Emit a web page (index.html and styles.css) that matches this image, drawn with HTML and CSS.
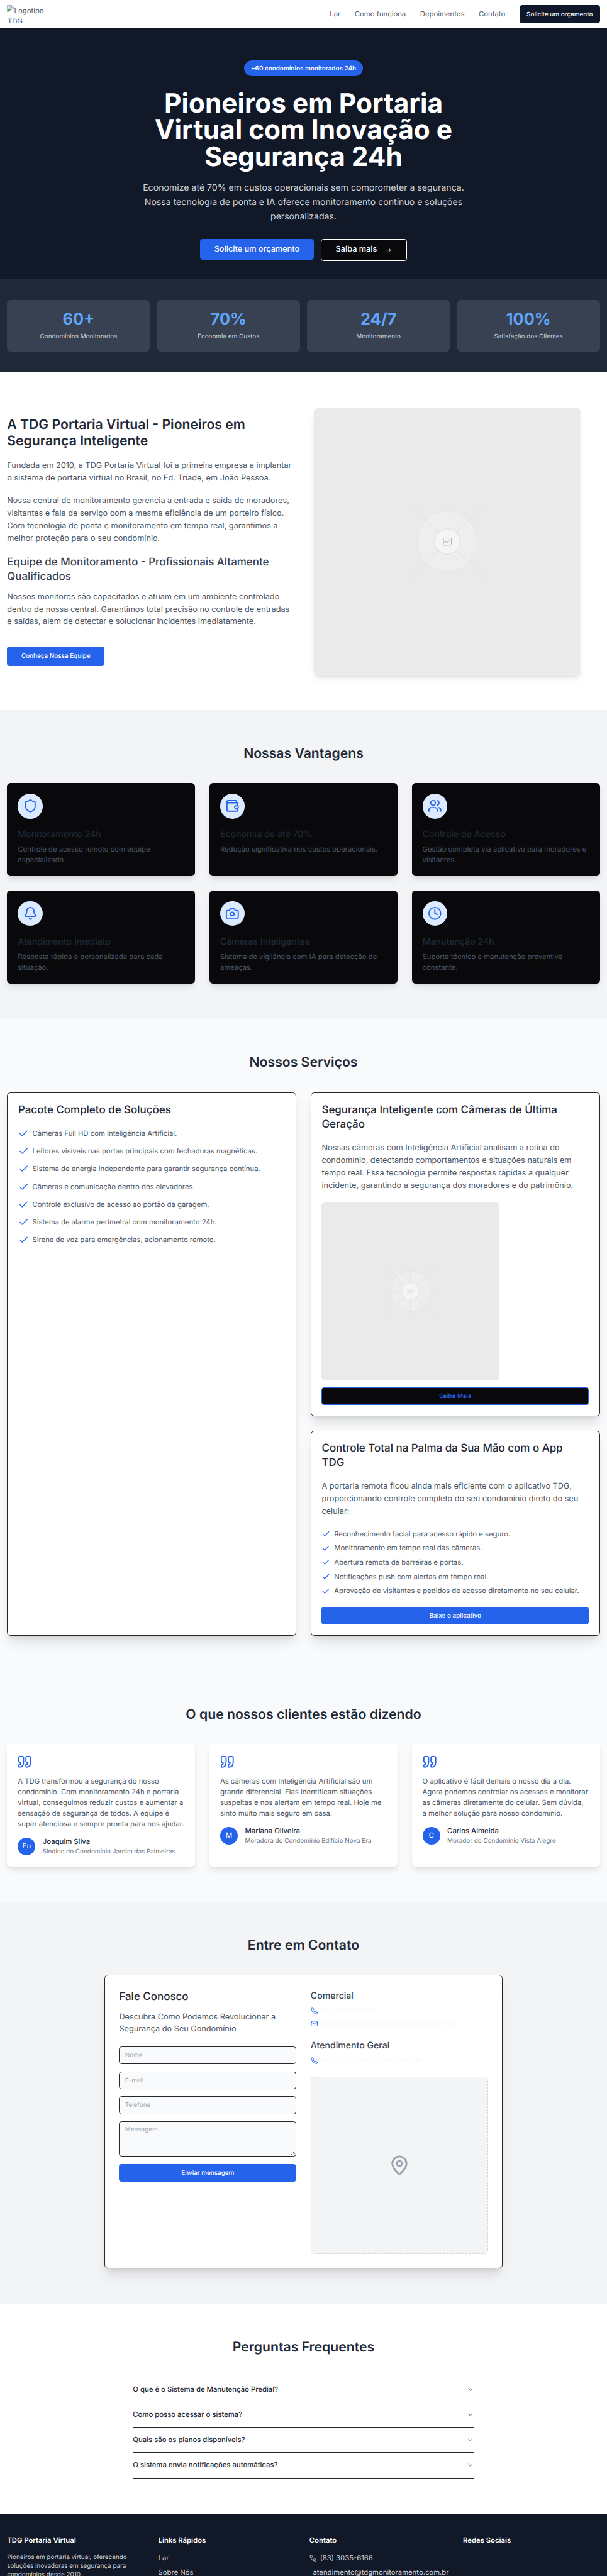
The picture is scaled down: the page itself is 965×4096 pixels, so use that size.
FILE: index.html
```
<!DOCTYPE html>
<html lang="pt-BR">
<head>
<meta charset="utf-8">
<title>TDG Portaria Virtual</title>
<link rel="stylesheet" href="styles.css">
</head>
<body>
<svg class="defs" aria-hidden="true">
  <defs>
    <radialGradient id="ray" gradientUnits="userSpaceOnUse" cx="300" cy="300" r="132">
      <stop offset="0" stop-color="#c9c9c9"/>
      <stop offset="0.25" stop-color="#d6d6d6"/>
      <stop offset="0.72" stop-color="#dedede" stop-opacity="0.6"/>
      <stop offset="1" stop-color="#e2e2e2" stop-opacity="0"/>
    </radialGradient>
    <radialGradient id="ray-short" gradientUnits="userSpaceOnUse" cx="300" cy="300" r="95">
      <stop offset="0" stop-color="#c9c9c9"/>
      <stop offset="0.35" stop-color="#d6d6d6"/>
      <stop offset="0.72" stop-color="#dedede" stop-opacity="0.7"/>
      <stop offset="1" stop-color="#e2e2e2" stop-opacity="0"/>
    </radialGradient>
  </defs>
  <symbol id="i-check" viewBox="0 0 24 24"><path d="M20 6 9 17l-5-5"/></symbol>
  <symbol id="i-chevron" viewBox="0 0 24 24"><path d="m6 9 6 6 6-6"/></symbol>
  <symbol id="i-phone" viewBox="0 0 24 24"><path d="M22 16.92v3a2 2 0 0 1-2.18 2 19.79 19.79 0 0 1-8.63-3.07 19.5 19.5 0 0 1-6-6 19.79 19.79 0 0 1-3.07-8.67A2 2 0 0 1 4.11 2h3a2 2 0 0 1 2 1.72 12.84 12.84 0 0 0 .7 2.81 2 2 0 0 1-.45 2.11L8.09 9.91a16 16 0 0 0 6 6l1.27-1.27a2 2 0 0 1 2.11-.45 12.84 12.84 0 0 0 2.81.7A2 2 0 0 1 22 16.92z"/></symbol>
  <symbol id="i-quote" viewBox="0 0 24 24"><path d="M3 21c3 0 7-1 7-8V5c0-1.25-.756-2.017-2-2H4c-1.25 0-2 .75-2 1.972V11c0 1.25.75 2 2 2 1 0 1 0 1 1v1c0 1-1 2-2 2s-1 .008-1 1.031V20c0 1 0 1 1 1z"/><path d="M15 21c3 0 7-1 7-8V5c0-1.25-.757-2.017-2-2h-4c-1.25 0-2 .75-2 1.972V11c0 1.25.75 2 2 2h.75c0 2.25.25 4-2.75 4v3c0 1 0 1 1 1z"/></symbol>
  <symbol id="placeholder" viewBox="0 0 600 600">
    <rect width="600" height="600" fill="#eaeaea"/>
    <circle cx="300" cy="300" r="68" fill="#eeeeee" stroke="#e1e1e1" stroke-width="1.2"/>
    <path stroke="url(#ray)" stroke-width="1.2" fill="none" d="M206 206 394 394M394 206 206 394"/>
    <path stroke="url(#ray-short)" stroke-width="1.2" fill="none" d="M205 299.5 395 299.6M299.6 205 299.5 395"/>
    <circle cx="300.3" cy="300" r="28.4" fill="#f5f5f5" stroke="#dadada" stroke-width="1.2"/>
    <path fill="none" stroke="#a8a8a8" stroke-width="1.3" stroke-linejoin="round" d="M291.7 292.5h17.8v14a2 2 0 0 1-2 2h-13.8a2 2 0 0 1-2-2zM292 303.500l2.500-2a5 5 0 0 1 5.500.4l2.500 2.300M299.500 301.500l4.200-4.300a1 1 0 0 1 1.600 0l4 3.800"/>
  </symbol>
</svg>
<div class="page">
  <header class="topbar">
    <div class="logo">
      <svg class="broken" viewBox="0 0 16 16"><path d="M.5.5h10l5 5v3l-4 3-3.500-1.500L.5 15.500z" fill="#c3d8f8"/><path d="M2 5.500c1-1.600 3-1.600 4 0 1 0 1.500 1 1.500 1.500H1.500c0-.6 0-1.300.5-1.500z" fill="#fff"/><path d="M1 15v-2.500l4-4 4 2L4.500 15z" fill="#4aa33c"/><path d="M.5 15.500V.5h10l5 5v3M10.500.5v5h5" fill="none" stroke="#9a9a9a"/></svg><span>Logotipo TDG</span>
    </div>
    <nav class="nav">
      <a>Lar</a><a>Como funciona</a><a>Depoimentos</a><a>Contato</a>
      <a class="btn btn-dark">Solicite um orçamento</a>
    </nav>
  </header>

  <section class="hero">
    <span class="badge">+60 condomínios monitorados 24h</span>
    <h1>Pioneiros em Portaria<br>Virtual com Inovação e<br>Segurança 24h</h1>
    <p>Economize até 70% em custos operacionais sem comprometer a segurança.<br>Nossa tecnologia de ponta e IA oferece monitoramento contínuo e soluções<br>personalizadas.</p>
    <div class="hero-actions">
      <a class="btn btn-lg btn-blue">Solicite um orçamento</a>
      <a class="btn btn-lg btn-outline">Saiba mais
        <svg class="icon arrow" viewBox="0 0 24 24"><path d="M5 12h14M12 5l7 7-7 7"/></svg></a>
    </div>
  </section>

  <section class="stats">
    <div class="stat"><strong>60+</strong><span>Condomínios Monitorados</span></div>
    <div class="stat"><strong>70%</strong><span>Economia em Custos</span></div>
    <div class="stat"><strong>24/7</strong><span>Monitoramento</span></div>
    <div class="stat"><strong>100%</strong><span>Satisfação dos Clientes</span></div>
  </section>

  <section class="about">
    <div class="about-text">
      <h2>A TDG Portaria Virtual - Pioneiros em<br>Segurança Inteligente</h2>
      <p>Fundada em 2010, a TDG Portaria Virtual foi a primeira empresa a implantar<br>o sistema de portaria virtual no Brasil, no Ed. Tríade, em João Pessoa.</p>
      <p>Nossa central de monitoramento gerencia a entrada e saída de moradores,<br>visitantes e fala de serviço com a mesma eficiência de um porteiro físico.<br>Com tecnologia de ponta e monitoramento em tempo real, garantimos a<br>melhor proteção para o seu condomínio.</p>
      <h3>Equipe de Monitoramento - Profissionais Altamente<br>Qualificados</h3>
      <p class="tight">Nossos monitores são capacitados e atuam em um ambiente controlado<br>dentro de nossa central. Garantimos total precisão no controle de entradas<br>e saídas, além de detectar e solucionar incidentes imediatamente.</p>
      <a class="btn btn-blue btn-team">Conheça Nossa Equipe</a>
    </div>
    <svg class="about-image"><use href="#placeholder"/></svg>
  </section>

  <section class="section gray">
    <h2 class="heading">Nossas Vantagens</h2>
    <div class="grid3">
      <article class="feature">
        <span class="bubble"><svg class="icon" viewBox="0 0 24 24"><path d="M20 13c0 5-3.500 7.500-7.660 8.950a1 1 0 0 1-.67-.01C7.500 20.500 4 18 4 13V6a1 1 0 0 1 1-1c2 0 4.500-1.200 6.240-2.720a1.170 1.170 0 0 1 1.520 0C14.510 3.810 17 5 19 5a1 1 0 0 1 1 1z"/></svg></span>
        <h3>Monitoramento 24h</h3><p>Controle de acesso remoto com equipe<br>especializada.</p>
      </article>
      <article class="feature">
        <span class="bubble"><svg class="icon" viewBox="0 0 24 24"><path d="M19 7V4a1 1 0 0 0-1-1H5a2 2 0 0 0 0 4h15a1 1 0 0 1 1 1v4h-3a2 2 0 0 0 0 4h3a1 1 0 0 0 1-1v-2a1 1 0 0 0-1-1"/><path d="M3 5v14a2 2 0 0 0 2 2h15a1 1 0 0 0 1-1v-4"/></svg></span>
        <h3>Economia de até 70%</h3><p>Redução significativa nos custos operacionais.</p>
      </article>
      <article class="feature">
        <span class="bubble"><svg class="icon" viewBox="0 0 24 24"><path d="M16 21v-2a4 4 0 0 0-4-4H6a4 4 0 0 0-4 4v2"/><circle cx="9" cy="7" r="4"/><path d="M22 21v-2a4 4 0 0 0-3-3.870M16 3.130a4 4 0 0 1 0 7.750"/></svg></span>
        <h3>Controle de Acesso</h3><p>Gestão completa via aplicativo para moradores e<br>visitantes.</p>
      </article>
      <article class="feature">
        <span class="bubble"><svg class="icon" viewBox="0 0 24 24"><path d="M10.268 21a2 2 0 0 0 3.464 0"/><path d="M3.262 15.326A1 1 0 0 0 4 17h16a1 1 0 0 0 .740-1.673C19.410 13.956 18 12.499 18 8A6 6 0 0 0 6 8c0 4.499-1.411 5.956-2.738 7.326"/></svg></span>
        <h3>Atendimento Imediato</h3><p>Resposta rápida e personalizada para cada<br>situação.</p>
      </article>
      <article class="feature">
        <span class="bubble"><svg class="icon" viewBox="0 0 24 24"><path d="M14.500 4h-5L7 7H4a2 2 0 0 0-2 2v9a2 2 0 0 0 2 2h16a2 2 0 0 0 2-2V9a2 2 0 0 0-2-2h-3z"/><circle cx="12" cy="13" r="3"/></svg></span>
        <h3>Câmeras Inteligentes</h3><p>Sistema de vigilância com IA para detecção de<br>ameaças.</p>
      </article>
      <article class="feature">
        <span class="bubble"><svg class="icon" viewBox="0 0 24 24"><circle cx="12" cy="12" r="10"/><path d="M12 6v6l4 2"/></svg></span>
        <h3>Manutenção 24h</h3><p>Suporte técnico e manutenção preventiva<br>constante.</p>
      </article>
    </div>
  </section>

  <section class="section light">
    <h2 class="heading">Nossos Serviços</h2>
    <div class="services">
      <article class="card">
        <h3>Pacote Completo de Soluções</h3>
        <ul class="checks">
          <li><svg class="icon"><use href="#i-check"/></svg>Câmeras Full HD com Inteligência Artificial.</li>
          <li><svg class="icon"><use href="#i-check"/></svg>Leitores visíveis nas portas principais com fechaduras magnéticas.</li>
          <li><svg class="icon"><use href="#i-check"/></svg>Sistema de energia independente para garantir segurança contínua.</li>
          <li><svg class="icon"><use href="#i-check"/></svg>Câmeras e comunicação dentro dos elevadores.</li>
          <li><svg class="icon"><use href="#i-check"/></svg>Controle exclusivo de acesso ao portão da garagem.</li>
          <li><svg class="icon"><use href="#i-check"/></svg>Sistema de alarme perimetral com monitoramento 24h.</li>
          <li><svg class="icon"><use href="#i-check"/></svg>Sirene de voz para emergências, acionamento remoto.</li>
        </ul>
      </article>
      <div class="stack">
        <article class="card">
          <h3>Segurança Inteligente com Câmeras de Última<br>Geração</h3>
          <p>Nossas câmeras com Inteligência Artificial analisam a rotina do<br>condomínio, detectando comportamentos e situações naturais em<br>tempo real. Essa tecnologia permite respostas rápidas a qualquer<br>incidente, garantindo a segurança dos moradores e do patrimônio.</p>
          <svg class="card-image"><use href="#placeholder"/></svg>
          <a class="btn btn-block btn-more">Saiba Mais</a>
        </article>
        <article class="card">
          <h3>Controle Total na Palma da Sua Mão com o App<br>TDG</h3>
          <p>A portaria remota ficou ainda mais eficiente com o aplicativo TDG,<br>proporcionando controle completo do seu condomínio direto do seu<br>celular:</p>
          <ul class="checks small">
            <li><svg class="icon"><use href="#i-check"/></svg>Reconhecimento facial para acesso rápido e seguro.</li>
            <li><svg class="icon"><use href="#i-check"/></svg>Monitoramento em tempo real das câmeras.</li>
            <li><svg class="icon"><use href="#i-check"/></svg>Abertura remota de barreiras e portas.</li>
            <li><svg class="icon"><use href="#i-check"/></svg>Notificações push com alertas em tempo real.</li>
            <li><svg class="icon"><use href="#i-check"/></svg>Aprovação de visitantes e pedidos de acesso diretamente no seu celular.</li>
          </ul>
          <a class="btn btn-block btn-blue btn-app">Baixe o aplicativo</a>
        </article>
      </div>
    </div>
  </section>

  <section class="section light">
    <h2 class="heading">O que nossos clientes estão dizendo</h2>
    <div class="grid3">
      <article class="quote">
        <svg class="icon"><use href="#i-quote"/></svg>
        <p>A TDG transformou a segurança do nosso<br>condomínio. Com monitoramento 24h e portaria<br>virtual, conseguimos reduzir custos e aumentar a<br>sensação de segurança de todos. A equipe é<br>super atenciosa e sempre pronta para nos ajudar.</p>
        <div class="author"><span class="avatar">Eu</span><div><b>Joaquim Silva</b><small>Síndico do Condomínio Jardim das Palmeiras</small></div></div>
      </article>
      <article class="quote">
        <svg class="icon"><use href="#i-quote"/></svg>
        <p>As câmeras com Inteligência Artificial são um<br>grande diferencial. Elas identificam situações<br>suspeitas e nos alertam em tempo real. Hoje me<br>sinto muito mais seguro em casa.</p>
        <div class="author"><span class="avatar">M</span><div><b>Mariana Oliveira</b><small>Moradora do Condomínio Edifício Nova Era</small></div></div>
      </article>
      <article class="quote">
        <svg class="icon"><use href="#i-quote"/></svg>
        <p>O aplicativo é fácil demais o nosso dia a dia.<br>Agora podemos controlar os acessos e monitorar<br>as câmeras diretamente do celular. Sem dúvida,<br>a melhor solução para nosso condomínio.</p>
        <div class="author"><span class="avatar">C</span><div><b>Carlos Almeida</b><small>Morador do Condomínio Vista Alegre</small></div></div>
      </article>
    </div>
  </section>

  <section class="section gray">
    <h2 class="heading">Entre em Contato</h2>
    <div class="contact">
      <form class="form">
        <h3>Fale Conosco</h3>
        <p>Descubra Como Podemos Revolucionar a<br>Segurança do Seu Condomínio</p>
        <input class="field" placeholder="Nome">
        <input class="field" placeholder="E-mail">
        <input class="field" placeholder="Telefone">
        <textarea class="field area" placeholder="Mensagem"></textarea>
        <a class="btn btn-block btn-blue">Enviar mensagem</a>
      </form>
      <div class="channels">
        <h4>Comercial</h4>
        <div class="line"><svg class="icon"><use href="#i-phone"/></svg><span>(83) 99334-7113</span></div>
        <div class="line"><svg class="icon" viewBox="0 0 24 24"><rect x="2" y="4" width="20" height="16" rx="2"/><path d="m22 7-8.970 5.700a1.940 1.940 0 0 1-2.060 0L2 7"/></svg><span>atendimento@tdgmonitoramento.com.br</span></div>
        <h4 class="second">Atendimento Geral</h4>
        <div class="line"><svg class="icon"><use href="#i-phone"/></svg><span>(83) 3035-6166 / 99129-8598</span></div>
        <div class="map"><svg class="icon" viewBox="0 0 24 24"><path d="M20 10c0 4.993-5.539 10.193-7.399 11.799a1 1 0 0 1-1.202 0C9.539 20.193 4 14.993 4 10a8 8 0 0 1 16 0"/><circle cx="12" cy="10" r="3"/></svg></div>
      </div>
    </div>
  </section>

  <section class="section white">
    <h2 class="heading">Perguntas Frequentes</h2>
    <div class="faq">
      <div class="faq-item">O que é o Sistema de Manutenção Predial?<svg class="icon"><use href="#i-chevron"/></svg></div>
      <div class="faq-item">Como posso acessar o sistema?<svg class="icon"><use href="#i-chevron"/></svg></div>
      <div class="faq-item">Quais são os planos disponíveis?<svg class="icon"><use href="#i-chevron"/></svg></div>
      <div class="faq-item">O sistema envia notificações automáticas?<svg class="icon"><use href="#i-chevron"/></svg></div>
    </div>
  </section>

  <footer class="footer">
    <div><h5>TDG Portaria Virtual</h5><p>Pioneiros em portaria virtual, oferecendo<br>soluções inovadoras em segurança para<br>condomínios desde 2010.</p></div>
    <div><h5>Links Rápidos</h5><a>Lar</a><a>Sobre Nós</a></div>
    <div><h5>Contato</h5><a class="tel"><svg class="icon"><use href="#i-phone"/></svg>(83) 3035-6166</a><a class="mail">atendimento@tdgmonitoramento.com.br</a></div>
    <div><h5>Redes Sociais</h5></div>
  </footer>
</div>
</body>
</html>
```
FILE: styles.css
```
/* 1rem = ten design pixels */
html { font-size: 7.0625px; }
*, *::before, *::after { box-sizing: border-box; margin: 0; padding: 0; }
body { font-family: Inter, "Liberation Sans", sans-serif; font-size: 1.6rem; line-height: 2.4rem; color: #09090b; background: #fff; text-rendering: geometricPrecision; }
.defs { position: absolute; width: 0; height: 0; }
.page { height: 4096px; overflow: hidden; display: flex; flex-direction: column; }
.page > * { flex-shrink: 0; }
h1, h2, h3, h4, h5, b { font-weight: 600; }
ul { list-style: none; }
.icon { width: 2.4rem; height: 2.4rem; flex-shrink: 0; fill: none; stroke: currentColor; stroke-width: 2; stroke-linecap: round; stroke-linejoin: round; }

.btn { display: flex; align-items: center; justify-content: center; height: 4rem; padding: 0 1.6rem; border-radius: .6rem; font-size: 1.4rem; line-height: 2rem; font-weight: 500; white-space: nowrap; }
.btn-dark { background: #0f172a; color: #f8fafc; }
.btn-blue { background: #2563eb; color: #fff; }
.btn-block { width: 100%; }
.btn-more { margin-top: 1.6rem; background: #09090b; border: 1px solid #2563eb; color: #2563eb; }
.btn-app { margin-top: 2.4rem; }
.btn-lg { height: 4.8rem; padding: 0 3.2rem; font-size: 1.8rem; line-height: 2.8rem; }
.btn-outline { height: 5rem; background: #09090b; border: 1px solid #fff; color: #fff; }
.btn-team { display: inline-flex; height: 4.4rem; padding: 0 3.2rem; margin-top: 4rem; }

.topbar { display: flex; justify-content: space-between; height: 6.4rem; padding: 1.2rem 1.6rem; background: #fff; }
.logo { display: flex; align-items: flex-start; width: 8.4rem; height: 4rem; overflow: hidden; color: #4b5563; }
.logo span { padding-top: .1rem; margin-left: -1.5rem; text-indent: 1.5rem; }
.broken { width: 1.6rem; height: 1.6rem; flex-shrink: 0; }
.nav { display: flex; align-items: center; gap: 3.2rem; color: #4b5563; }

.hero { height: 56.3rem; padding-top: 7.2rem; background: #111827; color: #fff; display: flex; flex-direction: column; align-items: center; text-align: center; }
.badge { padding: .8rem 1.6rem; border-radius: 5rem; background: #2563eb; font-size: 1.4rem; line-height: 2rem; font-weight: 600; }
.hero h1 { margin-top: 3.2rem; font-size: 6rem; line-height: 6rem; font-weight: 700; }
.hero p { margin-top: 2.4rem; font-size: 2rem; line-height: 3.25rem; color: #d1d5db; }
.hero-actions { display: flex; align-items: flex-start; gap: 1.6rem; margin-top: 3.2rem; }
.arrow { width: 1.6rem; height: 1.6rem; margin-left: 1.8rem; }

.stats { display: grid; grid-template-columns: repeat(4, 1fr); gap: 1.6rem; padding: 4.8rem 1.6rem; background: #1f2937; }
.stat { display: flex; flex-direction: column; align-items: center; gap: .8rem; padding: 2.4rem; border-radius: .8rem; background: #374151; }
.stat strong { font-size: 3.6rem; line-height: 4rem; font-weight: 700; color: #60a5fa; }
.stat span { font-size: 1.4rem; line-height: 2rem; color: #d1d5db; }

.about { display: grid; grid-template-columns: 1fr 1fr; gap: 4.8rem; align-items: center; padding: 8rem 1.6rem; background: #fff; }
.about-text { white-space: nowrap; }
.about-text h2 { font-size: 3rem; line-height: 3.6rem; color: #1f2937; }
.about-text h3 { margin-top: 2.4rem; font-size: 2.4rem; line-height: 3.2rem; font-weight: 500; color: #374151; }
.about-text p { margin-top: 2.4rem; font-size: 1.8rem; line-height: 2.8rem; color: #4b5563; }
.about-text p.tight { margin-top: 1.6rem; }
.about-image { width: 60rem; height: 60rem; border-radius: .8rem; box-shadow: 0 1rem 1.5rem -.3rem rgba(0,0,0,.1), 0 .4rem .6rem -.4rem rgba(0,0,0,.1); }

.section { padding: 8rem 1.6rem; }
.gray { background: #f3f4f6; }
.light { background: #f9fafb; }
.white { background: #fff; }
.heading { margin-bottom: 4.8rem; font-size: 3rem; line-height: 3.6rem; text-align: center; color: #1f2937; }
.grid3 { display: grid; grid-template-columns: repeat(3, 1fr); gap: 3.2rem; }

.feature { height: 21rem; padding: 2.4rem; border-radius: .8rem; background: #09090b; color: #4b5563; white-space: nowrap; box-shadow: 0 1rem 1.5rem -.3rem rgba(0,0,0,.1), 0 .4rem .6rem -.4rem rgba(0,0,0,.1); }
.bubble { display: flex; width: 5.6rem; height: 5.6rem; padding: 1.2rem; border-radius: 50%; background: #dbeafe; color: #2563eb; }
.bubble .icon { width: 3.2rem; height: 3.2rem; }
.feature h3 { margin-top: 2.2rem; margin-bottom: .8rem; font-size: 2rem; line-height: 2.8rem; font-weight: 500; color: #1f2937; }

.services { display: grid; grid-template-columns: 1fr 1fr; gap: 3.2rem; }
.stack { display: flex; flex-direction: column; gap: 3.2rem; }
.card { padding: calc(2.5rem - 1px); border: 1px solid #27272a; border-radius: .8rem; background: #fff; color: #4b5563; white-space: nowrap; box-shadow: 0 2rem 2.5rem -.5rem rgba(0,0,0,.1), 0 .8rem 1rem -.6rem rgba(0,0,0,.1); }
.card h3 { font-size: 2.4rem; line-height: 3.2rem; font-weight: 500; color: #1f2937; }
.card p { margin-top: 2.4rem; font-size: 1.8rem; line-height: 2.8rem; }
.card-image { display: block; width: 40rem; height: 40rem; margin-top: 2.4rem; border-radius: .8rem; }
.checks { display: flex; flex-direction: column; gap: 1.6rem; margin-top: 2.4rem; }
.checks li { display: flex; align-items: center; gap: .8rem; }
.checks .icon { color: #2563eb; }
.checks.small { gap: .8rem; }
.checks.small .icon { width: 2rem; height: 2rem; }

.quote { padding: 2.4rem; border-radius: .8rem; background: #fff; color: #4b5563; white-space: nowrap; box-shadow: 0 1rem 1.5rem -.3rem rgba(0,0,0,.1), 0 .4rem .6rem -.4rem rgba(0,0,0,.1); }
.quote > .icon { display: block; width: 3.2rem; height: 3.2rem; color: #2563eb; }
.quote p { margin: 1.6rem 0; }
.author { display: flex; align-items: center; gap: 1.6rem; }
.author b { display: block; font-weight: 500; color: #1f2937; }
.author small { display: block; font-size: 1.4rem; line-height: 2rem; color: #6b7280; }
.avatar { display: flex; align-items: center; justify-content: center; width: 4rem; height: 4rem; border-radius: 50%; background: #2563eb; color: #fff; }

.contact { display: grid; grid-template-columns: 1fr 1fr; gap: 3.2rem; width: 89.6rem; margin: 0 auto; padding: calc(3.3rem - 1px); border: 1px solid #27272a; border-radius: .8rem; background: #fff; box-shadow: 0 2rem 2.5rem -.5rem rgba(0,0,0,.1), 0 .8rem 1rem -.6rem rgba(0,0,0,.1); }
.form { display: flex; flex-direction: column; gap: 1.6rem; }
.form h3 { font-size: 2.4rem; line-height: 3.2rem; font-weight: 500; color: #1f2937; }
.form p { margin-bottom: .8rem; font-size: 1.8rem; line-height: 2.8rem; color: #4b5563; }
.field { display: block; width: 100%; height: 4rem; padding: .8rem 1.2rem; border: 1px solid #27272a; border-radius: .6rem; background: #f9fafb; font: inherit; font-size: 1.4rem; line-height: 2rem; outline: none; text-rendering: inherit; }
.area { height: 8rem; }
.field::placeholder { color: #9ca3af; opacity: 1; }
.channels h4 { margin-bottom: .8rem; font-size: 2rem; line-height: 2.8rem; font-weight: 500; color: #374151; }
.channels h4.second { margin-top: 2.4rem; }
.line { display: flex; align-items: center; gap: .8rem; color: #fafafa; }
.line + .line { margin-top: .4rem; }
.line .icon { width: 1.6rem; height: 1.6rem; color: #2563eb; }
.map { display: flex; align-items: center; justify-content: center; aspect-ratio: 1; margin-top: 2.4rem; border: 1.4px dashed #d1d5db; border-radius: .8rem; background: #f3f4f6; color: #9ca3af; }
.map .icon { width: 4.8rem; height: 4.8rem; }

.faq { width: 76.8rem; margin: 0 auto; }
.faq-item { display: flex; align-items: center; justify-content: space-between; height: 5.7rem; border-bottom: 1px solid #27272a; font-weight: 500; color: #1f2937; }
.faq-item .icon { width: 1.6rem; height: 1.6rem; }

.footer { display: grid; grid-template-columns: repeat(4, 1fr); gap: 3.2rem; padding: 4.8rem 1.6rem; background: #111827; color: #d1d5db; white-space: nowrap; }
.footer h5 { margin-bottom: 1.6rem; font-size: 1.6rem; line-height: 2.4rem; color: #fff; }
.footer p { font-size: 1.4rem; line-height: 2rem; }
.footer a { display: flex; align-items: center; gap: .8rem; margin-bottom: .8rem; }
.footer .icon { width: 1.6rem; height: 1.6rem; }
.footer .mail { padding-left: .8rem; }
```
